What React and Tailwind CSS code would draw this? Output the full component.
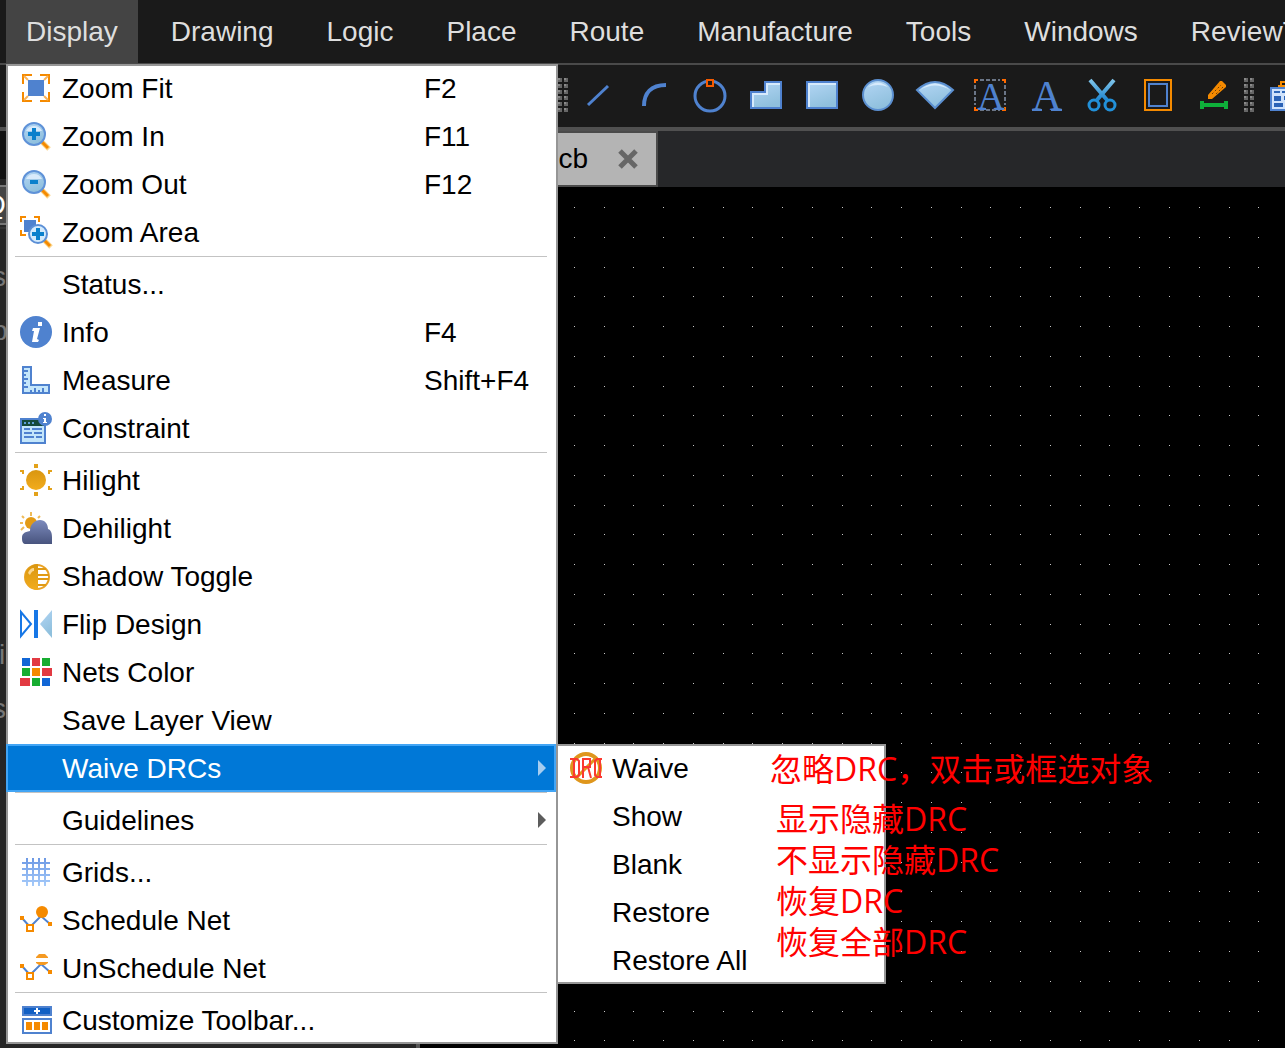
import clsx from 'clsx'

const MENUS = ['Display', 'Drawing', 'Logic', 'Place', 'Route', 'Manufacture', 'Tools', 'Windows', 'ReviewT']

const DISPLAY_MENU = [
  [
    { label: 'Zoom Fit', keys: 'F2', icon: ZoomFitIcon },
    { label: 'Zoom In', keys: 'F11', icon: ZoomInIcon },
    { label: 'Zoom Out', keys: 'F12', icon: ZoomOutIcon },
    { label: 'Zoom Area', icon: ZoomAreaIcon },
  ],
  [
    { label: 'Status...' },
    { label: 'Info', keys: 'F4', icon: InfoIcon },
    { label: 'Measure', keys: 'Shift+F4', icon: MeasureIcon },
    { label: 'Constraint', icon: ConstraintIcon },
  ],
  [
    { label: 'Hilight', icon: HilightIcon },
    { label: 'Dehilight', icon: DehilightIcon },
    { label: 'Shadow Toggle', icon: ShadowIcon },
    { label: 'Flip Design', icon: FlipIcon },
    { label: 'Nets Color', icon: NetsColorIcon },
    { label: 'Save Layer View' },
    {
      label: 'Waive DRCs',
      active: true,
      children: [
        { label: 'Waive', icon: WaiveIcon },
        { label: 'Show' },
        { label: 'Blank' },
        { label: 'Restore' },
        { label: 'Restore All' },
      ],
    },
  ],
  [{ label: 'Guidelines', arrow: true }],
  [
    { label: 'Grids...', icon: GridsIcon },
    { label: 'Schedule Net', icon: ScheduleIcon },
    { label: 'UnSchedule Net', icon: UnscheduleIcon },
  ],
  [{ label: 'Customize Toolbar...', icon: CustomizeIcon }],
]

const TOOLS = [
  { label: 'Line', icon: LineIcon },
  { label: 'Arc', icon: ArcIcon },
  { label: 'Circle', icon: CircleIcon },
  { label: 'Polygon', icon: PolygonIcon },
  { label: 'Rectangle', icon: RectIcon },
  { label: 'Filled circle', icon: DiscIcon },
  { label: 'Sector', icon: SectorIcon },
  { label: 'Edit text', icon: TextFrameIcon },
  { label: 'Text', icon: TextIcon },
  { label: 'Cut', icon: ScissorsIcon },
  { label: 'Outline', icon: OutlineIcon },
  { label: 'Dimension', icon: DimensionIcon },
]

function Svg({ children, ...rest }) {
  return (
    <svg viewBox="0 0 32 32" className="size-8 shrink-0 overflow-visible" fill="none" aria-hidden="true" {...rest}>
      {children}
    </svg>
  )
}

function Gradients() {
  return (
    <svg className="absolute size-0" aria-hidden="true">
      <defs>
        <linearGradient id="sky" x1="0" y1="0" x2="0.4" y2="1">
          <stop offset="0" stopColor="#b4d6f5" />
          <stop offset="1" stopColor="#8fc0dd" />
        </linearGradient>
        <linearGradient id="gold" x1="0" y1="0" x2="0" y2="1">
          <stop offset="0" stopColor="#d99610" />
          <stop offset="1" stopColor="#f2ac1c" />
        </linearGradient>
        <linearGradient id="cloud" x1="0" y1="0" x2="0" y2="1">
          <stop offset="0" stopColor="#7d8bbd" />
          <stop offset="1" stopColor="#48547e" />
        </linearGradient>
        <linearGradient id="steel" x1="0" y1="0" x2="0" y2="1">
          <stop offset="0" stopColor="#7fc4ea" />
          <stop offset="1" stopColor="#1f86d0" />
        </linearGradient>
        <linearGradient id="mesh" x1="0" y1="2" x2="0" y2="30" gradientUnits="userSpaceOnUse">
          <stop offset="0" stopColor="#6c98e4" />
          <stop offset="1" stopColor="#a6cbfa" />
        </linearGradient>
      </defs>
    </svg>
  )
}

/* ---------- menu icons ---------- */

function ZoomFitIcon() {
  return (
    <Svg>
      <path d="M3 12V3h9M20 3h9v9M29 20v9h-9M12 29H3v-9" stroke="#f58a00" strokeWidth="2" />
      <path d="M4 4l4 4M28 4l-4 4M28 28l-4-4M4 28l4-4" stroke="#f9b45c" strokeWidth="2" />
      <path d="M8 8h16v16H8z" fill="#4f82cf" />
    </Svg>
  )
}

function Lens({ plus }) {
  return (
    <Svg>
      <path d="M21 21l8 8" stroke="#fbd48a" strokeWidth="5" />
      <path d="M21 21l7 7" stroke="#f58a00" strokeWidth="3" />
      <circle cx="14" cy="14" r="11" fill="url(#sky)" stroke="#5f92d8" strokeWidth="2" />
      <path d="M6 11a9 9 0 0 1 16 0z" fill="#d8eafb" />
      <path d={plus ? 'M8 12h12v4H8zM12 8h4v12h-4z' : 'M10 12h8v4h-8z'} fill="#0a80cc" />
    </Svg>
  )
}

function ZoomInIcon() {
  return <Lens plus />
}

function ZoomOutIcon() {
  return <Lens />
}

function ZoomAreaIcon() {
  return (
    <Svg>
      <path d="M1 6V1h5M14 1h5v5M1 14v5h5" stroke="#f58a00" strokeWidth="2" />
      <path d="M4 4h12v12H4z" fill="#4f82cf" />
      <path d="M24 24l7 7" stroke="#fbd48a" strokeWidth="5" />
      <path d="M24 24l6 6" stroke="#f58a00" strokeWidth="3" />
      <circle cx="18" cy="18" r="9" fill="#d3eafc" stroke="#5b8fd6" strokeWidth="2" />
      <path d="M12 16h12v4H12zM16 12h4v12h-4z" fill="#0a80cc" />
    </Svg>
  )
}

function InfoIcon() {
  return (
    <Svg>
      <circle cx="16" cy="16" r="16" fill="#4f82cf" />
      <path d="M18 6h4v4h-4z" fill="#fff" />
      <path d="M13 12h7l-3 11 2 1-1 2h-6l2-11h-2z" fill="#fff" />
    </Svg>
  )
}

function MeasureIcon() {
  return (
    <Svg>
      <path d="M3 3h8v18h18v8H3z" fill="#c4e6fb" stroke="#4f82cf" strokeWidth="2" />
      <path d="M4 7h4M4 11h2M4 15h4M4 19h2M4 23h4M11 28v-2M15 28v-4M19 28v-2M23 28v-4" stroke="#4f82cf" strokeWidth="2" />
    </Svg>
  )
}

function ConstraintIcon() {
  return (
    <Svg>
      <path d="M1 7h24v24H1z" fill="#c4e6fb" stroke="#4f82cf" strokeWidth="2" />
      <path d="M2 8h22v6H2z" fill="#154a3a" />
      <path d="M4 11h2M8 11h2M12 11h2" stroke="#5fa0d8" strokeWidth="2" />
      <path d="M4 17h6M12 17h10M4 21h8M14 21h8M4 25h10M16 25h6" stroke="#4f82cf" strokeWidth="2" />
      <circle cx="25" cy="7" r="7" fill="#4f82cf" />
      <path d="M24 2h2v2h-2zM23 6h3v4h1v1h-4v-1h1V7h-1z" fill="#fff" />
    </Svg>
  )
}

function HilightIcon() {
  return (
    <Svg>
      <circle cx="16" cy="16" r="10" fill="url(#gold)" />
      <path d="M14 0h4v4h-4zM14 28h4v4h-4zM0 6h4v4H2V8H0zM32 6h-4v4h2V8h2zM0 26h4v-4H2v2H0zM32 26h-4v-4h2v2h2z" fill="#e3a21a" />
    </Svg>
  )
}

function DehilightIcon() {
  return (
    <Svg>
      <circle cx="11" cy="11" r="6" fill="#e39a14" />
      <path d="M11 0v4M2 4l2 2M20 4l-2 2M0 11h3M1 18l3-3" stroke="#efbb58" strokeWidth="2" />
      <path d="M6 32c-3 0-4-2-4-6s2-6 8-7c0-7 5-11 10-11s8 4 8 9c3 1 4 4 4 8v7z" fill="url(#cloud)" />
    </Svg>
  )
}

function ShadowIcon() {
  return (
    <Svg>
      <circle cx="17" cy="17" r="12" fill="#fff" stroke="#eaa326" strokeWidth="2" />
      <path d="M18 4a13 13 0 0 0 0 26z" fill="url(#gold)" />
      <path d="M18 9h8M18 15h11M18 19h11M18 25h8" stroke="#e09a14" strokeWidth="2" />
      <path d="M8 13c1-3 3-5 6-5v3c-2 0-3 2-4 4z" fill="#fbd68c" />
    </Svg>
  )
}

function FlipIcon() {
  return (
    <Svg>
      <path d="M1 4v24l10-12z" stroke="#1777e6" strokeWidth="2" />
      <path d="M14 2h4v28h-4z" fill="#1777e6" />
      <path d="M32 2v28L20 16z" fill="url(#sky)" />
    </Svg>
  )
}

function NetsColorIcon() {
  return (
    <Svg>
      <path d="M2 2h8v8H2zM22 22h8v8h-8z" fill="#1166d6" />
      <path d="M12 2h8v8h-8zM22 12h10v8H22zM0 22h10v8H0z" fill="#e23a42" />
      <path d="M22 2h8v8h-8zM2 12h8v8H2zM12 22h8v8h-8z" fill="#17ad31" />
      <path d="M12 12h8v8h-8z" fill="#f58a00" />
    </Svg>
  )
}

function GridsIcon() {
  return (
    <Svg>
      <path d="M7 2v28M13 2v28M19 2v28M25 2v28M2 7h28M2 13h28M2 19h28M2 25h28" stroke="url(#mesh)" strokeWidth="2" />
    </Svg>
  )
}

function NetPath() {
  return (
    <>
      <path d="M2 14l8 9 11-11 9 8" stroke="#4f82cf" strokeWidth="2" />
      <path d="M0 12h4v4H0zM28 18h4v4h-4z" fill="#f58a00" />
      <path d="M7 21h6v6H7z" fill="#fff" stroke="#f58a00" strokeWidth="2" />
    </>
  )
}

function ScheduleIcon() {
  return (
    <Svg>
      <NetPath />
      <circle cx="22" cy="8" r="6" fill="#f58a00" />
    </Svg>
  )
}

function UnscheduleIcon() {
  return (
    <Svg>
      <NetPath />
      <path d="M16 6V5l3-3h6l3 3v1zM16 10h12v1l-3 2h-6l-3-2z" fill="#f59a22" />
    </Svg>
  )
}

function CustomizeIcon() {
  return (
    <Svg>
      <path d="M3 3h28v8H3z" fill="#1260c4" stroke="#4f82cf" strokeWidth="2" />
      <path d="M14 7h6M17 4v6" stroke="#fff" strokeWidth="2" />
      <path d="M3 15h28v14H3z" fill="#fff" stroke="#4f82cf" strokeWidth="2" />
      <path d="M6 18h6v8H6zM14 18h6v8h-6zM22 18h6v8h-6z" fill="#f58a00" />
    </Svg>
  )
}

function WaiveIcon() {
  return (
    <Svg>
      <circle cx="16" cy="16" r="14" stroke="#df961c" strokeWidth="4" />
      <path d="M26 6L6 26" stroke="#df961c" strokeWidth="3" />
      <path
        d="M0 7h7l2 2v14l-2 2H0M4 7v18M13 6v20M13 7h7v8h-7M18 15l3 11M32 7h-5l-2 2v14l2 2h5M30 7v18"
        stroke="#fb3a30"
        strokeWidth="2"
      />
    </Svg>
  )
}

/* ---------- toolbar icons ---------- */

function LineIcon() {
  return (
    <Svg>
      <path d="M6 26L26 7" stroke="#4f82cf" strokeWidth="3" />
    </Svg>
  )
}

function ArcIcon() {
  return (
    <Svg>
      <path d="M6 27C6 14 13 6 28 6" stroke="#4f82cf" strokeWidth="4" />
    </Svg>
  )
}

function CircleIcon() {
  return (
    <Svg>
      <circle cx="16" cy="17" r="15" stroke="#4f82cf" strokeWidth="3" />
      <path d="M13 1h6v6h-6z" fill="#1a1a1a" stroke="#f55a00" strokeWidth="2" />
    </Svg>
  )
}

function PolygonIcon() {
  return (
    <Svg>
      <path d="M1 13h14V3h16v26H1z" fill="url(#sky)" stroke="#4f82cf" strokeWidth="2" />
      <path d="M3 28V15h14V5h13" stroke="#d6eafc" strokeWidth="2" />
    </Svg>
  )
}

function RectIcon() {
  return (
    <Svg>
      <path d="M1 3h30v26H1z" fill="url(#sky)" stroke="#4f82cf" strokeWidth="2" />
      <path d="M3 28V5h27" stroke="#d6eafc" strokeWidth="2" />
    </Svg>
  )
}

function DiscIcon() {
  return (
    <Svg>
      <circle cx="16" cy="16" r="15" fill="url(#sky)" stroke="#5b8fd0" strokeWidth="2" />
      <path d="M6 8q10-9 20 0-10-4-20 0z" fill="#d6eafc" />
    </Svg>
  )
}

function SectorIcon() {
  return (
    <Svg>
      <path d="M-1 11Q17-5 35 11L17 29z" fill="url(#sky)" stroke="#5b8fd0" strokeWidth="2" />
      <path d="M2 11Q17-2 32 11 17 2 2 11z" fill="#d6eafc" />
    </Svg>
  )
}

function TextIcon() {
  return (
    <Svg>
      <text x="17" y="31" textAnchor="middle" fontSize="42" fill="#4f82cf" className="font-['Liberation_Serif',serif]">
        A
      </text>
      <path d="M2 31h10M21 31h11" stroke="#4f82cf" strokeWidth="2" />
    </Svg>
  )
}

function TextFrameIcon() {
  return (
    <Svg>
      <path d="M6 1h20M6 31h20M1 6v20M31 6v20" stroke="#6b7687" strokeWidth="2" strokeDasharray="4 2" />
      <path d="M0 0h4v2H2v2H0zM32 0h-4v2h2v2h2zM0 32h4v-2H2v-2H0zM32 32h-4v-2h2v-2h2z" fill="#ff6a00" />
      <text x="17" y="30" textAnchor="middle" fontSize="38" fill="#4f82cf" className="font-['Liberation_Serif',serif]">
        A
      </text>
      <path d="M4 30h8M21 30h9" stroke="#4f82cf" strokeWidth="2" />
    </Svg>
  )
}

function ScissorsIcon() {
  return (
    <Svg>
      <path d="M4 1l17 20M28 1L11 21" stroke="url(#steel)" strokeWidth="4" />
      <circle cx="8" cy="26" r="5" stroke="#2290d8" strokeWidth="3" />
      <circle cx="24" cy="26" r="5" stroke="#2290d8" strokeWidth="3" />
    </Svg>
  )
}

function OutlineIcon() {
  return (
    <Svg>
      <path d="M3 1h26v30H3z" stroke="#f58a00" strokeWidth="2" />
      <path d="M7 5h18v22H7z" stroke="#4f82cf" strokeWidth="2" />
    </Svg>
  )
}

function DimensionIcon() {
  return (
    <Svg>
      <path d="M10 20v-4L22 2h2l4 4v2L14 20z" fill="#f58a00" />
      <path d="M14 15l9-9M18 15l7-7" stroke="#6b3d06" strokeDasharray="2 2" />
      <path d="M2 22h4v2h20v-2h4v8h-4v-2H6v2H2z" fill="#0eb03a" />
    </Svg>
  )
}

function SheetIcon() {
  return (
    <Svg>
      <path d="M3 9h30v22H3z" fill="#cfe2fb" stroke="#4f82cf" strokeWidth="2" />
      <path d="M6 13h6M14 13h8" stroke="#2f68b8" strokeWidth="2" />
      <path d="M6 17h7v5H6zM16 17h8v4h-8zM6 24h9v4H6zM18 24h8v4h-8z" fill="#2a62b6" />
      <path d="M13 7V3h10M10 7h7" stroke="#f58a00" strokeWidth="2" />
    </Svg>
  )
}

function Grip() {
  return (
    <svg viewBox="0 0 14 36" className="h-9 w-[14px] shrink-0" aria-hidden="true">
      {[0, 1, 2, 3, 4, 5].map((i) => (
        <g key={i}>
          <path d={`M2 ${i * 6 + 1}h4v4h-4zM8 ${i * 6 + 1}h4v4h-4z`} fill="#666" />
          <path d={`M2 ${i * 6 + 1}h2v2h-2zM8 ${i * 6 + 1}h2v2h-2z`} fill="#8a8a8a" />
        </g>
      ))}
    </svg>
  )
}

/* ---------- layout ---------- */

function MenuBar() {
  return (
    <nav className="flex h-[65px] shrink-0 gap-[13px] border-b-2 border-[#4a4a4a] bg-[#1a1a1a] pl-[6px]">
      {MENUS.map((name, i) => (
        <button
          key={name}
          type="button"
          className={clsx('h-[63px] shrink-0 px-5 text-[28px] text-[#dedede]', i === 0 && 'bg-[#444]')}
        >
          {name}
        </button>
      ))}
    </nav>
  )
}

function ToolBar() {
  return (
    <div role="toolbar" className="flex h-[66px] shrink-0 items-center border-b-4 border-[#505050] bg-[#1a1a1a] pb-[2px] pl-[556px]">
      <Grip />
      {TOOLS.map(({ label, icon: Icon }) => (
        <button key={label} type="button" aria-label={label} className="grid h-14 w-14 shrink-0 place-items-center">
          <Icon />
        </button>
      ))}
      <Grip />
      <button type="button" aria-label="Sheet" className="grid h-14 w-14 shrink-0 place-items-center">
        <SheetIcon />
      </button>
    </div>
  )
}

function SidePanel() {
  return (
    <aside className="flex w-[420px] shrink-0 flex-col border-r-4 border-[#555] bg-[#262626] text-[28px] text-[#777]">
      <div className="h-12 bg-[#111]" />
      <div className="mt-[6px] h-10 border-y-2 border-[#777] bg-[#444]">
        <span className="-ml-4 block leading-9 text-white">Q</span>
      </div>
      <div className="mt-[2px] border-t-2 border-[#333] pt-[21px] leading-[54px]">
        <p className="-ml-2">s</p>
        <p className="-ml-2">p</p>
      </div>
      <div className="pt-[270px] leading-[54px]">
        <p className="-ml-px">i</p>
        <p className="-ml-2">s</p>
      </div>
    </aside>
  )
}

const PITCH = 29.76

function DotGrid() {
  let d = ''
  for (let row = 0; row < 40; row++) {
    for (let col = 0; col < 72; col++) {
      d += `M${Math.round(5 + col * PITCH)} ${Math.round(20 + row * PITCH)}h1v1h-1z`
    }
  }
  return (
    <svg className="absolute inset-0 size-full" shapeRendering="crispEdges" aria-hidden="true">
      <path d={d} fill="#c8c8c8" />
    </svg>
  )
}

function Workspace() {
  return (
    <main className="flex min-w-0 grow flex-col">
      <div className="flex h-14 shrink-0 bg-[#262729]">
        <div className="flex w-[238px] items-center justify-end gap-[30px] border-2 border-[#4a4a4a] bg-[#b4b4b4] pr-[18px] text-[28px] text-black">
          <span>cb</span>
          <button type="button" aria-label="Close tab">
            <svg viewBox="0 0 20 20" className="size-5" aria-hidden="true">
              <path d="M2 2l16 16M18 2L2 18" stroke="#666" strokeWidth="5" />
            </svg>
          </button>
        </div>
      </div>
      <div className="relative grow overflow-hidden bg-black">
        <DotGrid />
      </div>
    </main>
  )
}

function MenuItem({ item }) {
  const { label, keys, icon: Icon, active, arrow, children } = item
  return (
    <li className="relative">
      <button
        type="button"
        className={clsx(
          'flex h-12 w-full items-center pr-[10px] pl-[14px] text-left text-[28px]',
          active ? 'bg-[#0078d7] text-white shadow-[inset_0_0_0_2px_#42a5f5]' : 'text-black',
        )}
      >
        <span className="mr-[10px] size-8 shrink-0">{Icon && <Icon />}</span>
        <span className="grow pt-[2px] whitespace-nowrap">{label}</span>
        {keys && <span className="w-[122px] shrink-0 pt-[2px]">{keys}</span>}
        {(children || arrow) && (
          <svg viewBox="0 0 8 16" className="h-4 w-2" aria-hidden="true">
            <path d="M0 0l8 8-8 8z" fill={active ? '#a6cdf0' : '#5c5c5c'} />
          </svg>
        )}
      </button>
      {children && (
        <ul className="absolute top-0 left-full w-[330px] bg-white shadow-[inset_0_0_0_2px_#969696]">
          {children.map((child) => (
            <MenuItem key={child.label} item={child} />
          ))}
        </ul>
      )}
    </li>
  )
}

function DisplayMenu() {
  return (
    <div className="absolute top-16 left-[6px] w-[552px] bg-white pr-[2px] shadow-[inset_0_0_0_2px_#969696]">
      {DISPLAY_MENU.map((group, i) => (
        <div key={i}>
          {i > 0 && <hr className="mr-[9px] mb-[3px] ml-[9px] border-[#c3c3c3]" />}
          <ul>
            {group.map((item) => (
              <MenuItem key={item.label} item={item} />
            ))}
          </ul>
        </div>
      ))}
    </div>
  )
}

function Notes() {
  return (
    <div className="absolute top-[748px] left-[770px] font-['Open_Sans','Noto_Sans_CJK_SC',sans-serif] text-[32px] leading-[41px] whitespace-nowrap text-[#ff0000]">
      <p>忽略DRC，双击或框选对象</p>
      <div className="mt-[9px] ml-[6px]">
        <p>显示隐藏DRC</p>
        <p>不显示隐藏DRC</p>
        <p>恢复DRC</p>
        <p>恢复全部DRC</p>
      </div>
    </div>
  )
}

export default function App() {
  return (
    <div className="relative flex min-h-screen flex-col overflow-hidden bg-[#1a1a1a] font-['Liberation_Sans',Arial,sans-serif]">
      <Gradients />
      <MenuBar />
      <ToolBar />
      <div className="flex grow">
        <SidePanel />
        <Workspace />
      </div>
      <DisplayMenu />
      <Notes />
    </div>
  )
}
